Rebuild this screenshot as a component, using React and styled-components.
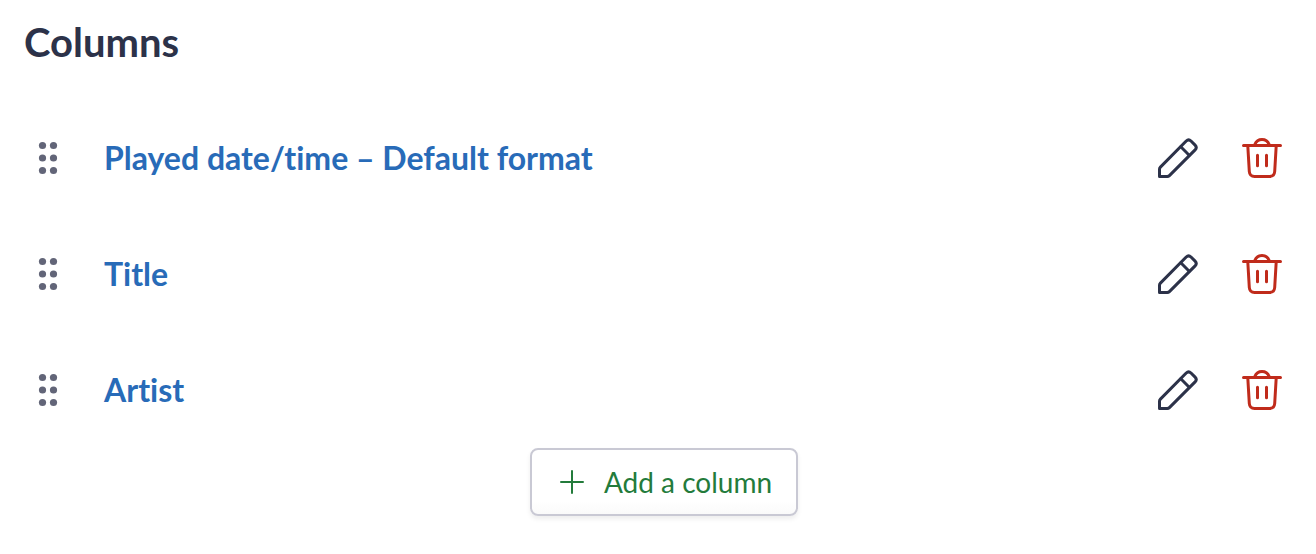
import React from 'react';
import styled, { createGlobalStyle } from 'styled-components';

const GlobalStyle = createGlobalStyle`
  * { box-sizing: border-box; }
  body {
    margin: 0;
    background: #fff;
    color: #2c3249;
    font-family: Lato, "Liberation Sans", sans-serif;
    font-variant-ligatures: none;
  }
`;

const Panel = styled.main`
  padding: 18px 12px 36px 24px;
`;

const Heading = styled.h2`
  margin: 0;
  font-size: 40px;
  line-height: 48px;
  font-weight: 700;
`;

const List = styled.ul`
  list-style: none;
  margin: 34px 0 0;
  padding: 0;
`;

const Row = styled.li`
  display: flex;
  align-items: center;
  padding: 16px 0;
`;

const IconButton = styled.button`
  display: flex;
  align-items: center;
  justify-content: center;
  flex: none;
  width: ${(p) => p.$width}px;
  height: 84px;
  padding: 0;
  border: 0;
  background: none;
  color: ${(p) => p.$color};
  cursor: pointer;
`;

const Name = styled.a`
  color: #286bb8;
  font-size: 32px;
  line-height: 40px;
  font-weight: 700;
  text-decoration: none;
  margin: 0 auto 0 32px;
`;

const Footer = styled.div`
  display: flex;
  justify-content: center;
`;

const AddButton = styled.button`
  display: flex;
  align-items: center;
  gap: 20px;
  height: 68px;
  padding: 0 24px 0 28px;
  border: 2px solid #c9c9d4;
  border-radius: 8px;
  background: linear-gradient(#fff 80%, #fafafa);
  box-shadow: 0 3px 5px rgba(0, 0, 0, 0.07);
  color: #237b3b;
  font-family: inherit;
  font-size: 28px;
  line-height: 36px;
  cursor: pointer;
`;

const Grip = () => (
  <svg width="20" height="34" viewBox="0 0 20 34" fill="currentColor" aria-hidden="true">
    {[4.5, 17, 29.5].map((y) => (
      <React.Fragment key={y}>
        <circle cx="4.5" cy={y} r="3.6" />
        <circle cx="15.5" cy={y} r="3.6" />
      </React.Fragment>
    ))}
  </svg>
);

const Icon = styled.svg`
  fill: none;
  stroke: currentColor;
  stroke-width: ${(p) => p.$weight || 3};
  stroke-linecap: round;
  stroke-linejoin: round;
`;

const Pencil = () => (
  <Icon width="40" height="40" viewBox="0 0 40 40" aria-hidden="true">
    <path d="M1.5 38.5V31.2Q1.5 30 2.4 29.1L28.2 3Q30.6 .8 33 3L37.1 7.1Q39.4 9.5 37.1 11.9L11.4 37.6Q10.5 38.5 9.2 38.5Z" />
    <path d="M22.8 8.8L31.2 17.2" />
  </Icon>
);

const Trash = () => (
  <Icon width="40" height="40" viewBox="0 0 40 40" aria-hidden="true">
    <path d="M1.5 7.5H38.5M12.8 6.5C14.2 3.2 16.8 1.5 20 1.5S25.8 3.2 27.2 6.5M5.8 8L7.3 33.5Q7.7 38.5 12.6 38.5H27.4Q32.3 38.5 32.7 33.5L34.2 8M15.5 17.3V27.7M24.5 17.3V27.7" />
  </Icon>
);

const Plus = () => (
  <Icon $weight={2} width="24" height="24" viewBox="0 0 24 24" aria-hidden="true">
    <path d="M12 1V23M1 12H23" />
  </Icon>
);

const columns = ['Played date/time – Default format', 'Title', 'Artist'];

export default function App() {
  return (
    <>
      <GlobalStyle />
      <Panel>
        <Heading>Columns</Heading>
        <List>
          {columns.map((name) => (
            <Row key={name}>
              <IconButton type="button" $width={48} $color="#626578" aria-label={`Move ${name}`}>
                <Grip />
              </IconButton>
              <Name href="#">{name}</Name>
              <IconButton type="button" $width={84} $color="#2c3249" aria-label={`Edit ${name}`}>
                <Pencil />
              </IconButton>
              <IconButton type="button" $width={84} $color="#c02b1b" aria-label={`Delete ${name}`}>
                <Trash />
              </IconButton>
            </Row>
          ))}
        </List>
        <Footer>
          <AddButton type="button">
            <Plus />
            Add a column
          </AddButton>
        </Footer>
      </Panel>
    </>
  );
}
